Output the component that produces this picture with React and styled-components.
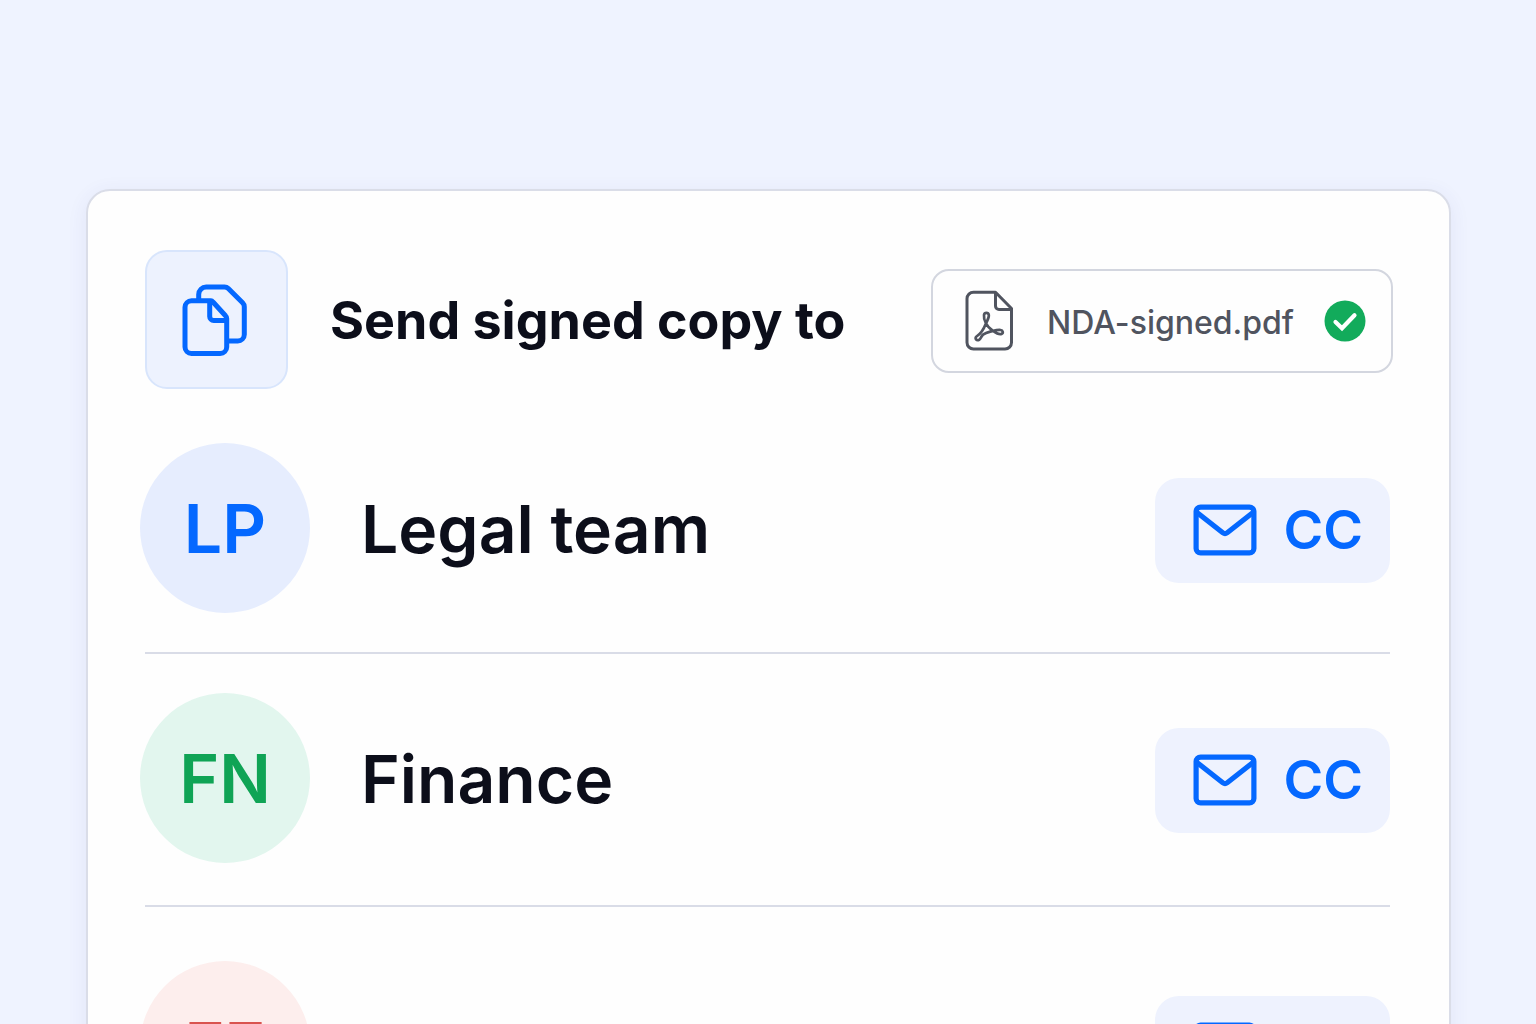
import React from "react";
import styled, { createGlobalStyle } from "styled-components";

const Global = createGlobalStyle`
  *, *::before, *::after { box-sizing: border-box; }
  body {
    margin: 0;
    background: #eff3ff;
    color: #0c0e1a;
    font-family: Inter, "Liberation Sans", sans-serif;
  }
  h1, h2, p, ul { margin: 0; padding: 0; }
`;

const Page = styled.main`
  height: 100vh;
  overflow: hidden;
  padding: 189px 85px 0 86px;
`;

const Card = styled.section`
  padding: 59px 59px 59px 57px;
  border: 2px solid #dadde8;
  border-radius: 24px;
  background: #fefefe;
  box-shadow: 0 4px 20px rgba(60, 70, 150, 0.08);
`;

const Header = styled.header`
  display: flex;
  align-items: center;
`;

const IconTile = styled.div`
  display: grid;
  place-items: center;
  flex: none;
  width: 143px;
  height: 139px;
  border: 2px solid #d8e5fc;
  border-radius: 22px;
  background: #edf2fe;
`;

const Title = styled.h1`
  flex: 1;
  margin: 2px 0 0 42px;
  font-size: 52px;
  line-height: 68px;
  font-weight: 700;
  white-space: nowrap;
`;

const FileChip = styled.div`
  display: flex;
  align-items: center;
  height: 104px;
  margin: 2px -3px 0 0;
  padding: 0 25px 0 32px;
  border: 2px solid #d3d6df;
  border-radius: 18px;
`;

const FileName = styled.span`
  margin: 4px 30px 0 33px;
  color: #50545f;
  font-size: 32px;
  line-height: 40px;
  font-weight: 500;
  white-space: nowrap;
`;

const List = styled.ul`
  margin-top: 54px;
  list-style: none;
`;

const Row = styled.li`
  display: flex;
  align-items: center;
  padding: ${(p) => p.$top}px 0 ${(p) => p.$bottom}px;
  border-bottom: 2px solid #d9dce7;
`;

const Avatar = styled.div`
  display: grid;
  place-items: center;
  flex: none;
  width: 170px;
  height: 170px;
  margin-left: -5px;
  border-radius: 50%;
  background: ${(p) => p.$bg};
  color: ${(p) => p.$fg};
  font-size: 68px;
  line-height: 84px;
  font-weight: 600;
`;

const Name = styled.h2`
  flex: 1;
  margin: 2px 0 0 51px;
  font-size: 66px;
  line-height: 84px;
  font-weight: 600;
`;

const CopyButton = styled.button`
  display: flex;
  align-items: center;
  gap: 26px;
  height: 105px;
  margin-top: 4px;
  padding: 0 27px 0 38px;
  border: 0;
  border-radius: 24px;
  background: #eef2fe;
  color: #0468ff;
  font-family: inherit;
  font-size: 54px;
  line-height: 68px;
  font-weight: 600;
  cursor: pointer;
`;

const CopyIcon = () => (
  <svg width="72" height="76" viewBox="1 0 72 76" fill="none" stroke="#0468ff" strokeWidth="5" strokeLinejoin="round" aria-hidden="true">
    <path d="M31 18.800H11.500a6.500 6.500 0 0 0-6.500 6.500V65a6.500 6.500 0 0 0 6.500 6.500h28.700a6.500 6.500 0 0 0 6.500-6.500V36.500q0-1.500-1.200-2.700L33 20q-1-1.200-2-1.200Z" />
    <path d="M29.700 19.500V34.500a4 4 0 0 0 4 4H46.500" />
    <path d="M18.700 18.500V12.500a7.500 7.500 0 0 1 7.500-7.500H44.500q2.200 0 3.800 1.600L62.600 20.800q1.700 1.700 1.700 4V52.500a6.500 6.500 0 0 1-6.500 6.500H47" />
  </svg>
);

const PdfIcon = () => (
  <svg width="49" height="61" viewBox="0 0 49 61" fill="none" stroke="#50545f" strokeWidth="3" strokeLinejoin="round" aria-hidden="true">
    <path d="M30.500 2.200H8.500A6.500 6.500 0 0 0 2 8.700V52.500A6.500 6.500 0 0 0 8.500 59H40a6.500 6.500 0 0 0 6.500-6.500V18.500Z" />
    <path d="M30.500 2.500V16a3.500 3.500 0 0 0 3.500 3.500H46.500" />
    <path strokeWidth="2.700" d="M11.500 46.500C16 43.500 19 38.500 20.700 34C22.500 30 24.300 27.500 23.800 25C23.300 22.200 19.500 22.200 19 25C18.600 28 19.600 30.500 20.800 33C22.500 36.800 25 38.800 28 40.800C31 43 34.500 44.600 36.500 43.900C38.600 43 38 40.300 35.500 40C32.500 39.700 29 40.700 26 41.400C23 42.200 20 43.100 18 44.600C16 46.300 16 48.700 14.200 49.700C11.500 51 9.300 48.300 11.500 46.500Z" />
  </svg>
);

const CheckIcon = () => (
  <svg width="42" height="42" viewBox="0 0 42 42" fill="none" role="img" aria-label="Signed">
    <circle cx="21" cy="21" r="20.500" fill="#12ab5b" />
    <path d="M11.500 22L18 28.200L30.500 15.200" stroke="#fff" strokeWidth="4.200" strokeLinecap="round" />
  </svg>
);

const MailIcon = () => (
  <svg width="64" height="52" viewBox="0 0 64 52" fill="none" stroke="#0468ff" strokeWidth="5.200" strokeLinejoin="round" aria-hidden="true">
    <rect x="3.100" y="3.100" width="57.800" height="45.800" rx="4.500" />
    <path d="M4 8.500L29.800 28.800Q32 30.500 34.200 28.800L60 8.500" />
  </svg>
);

const recipients = [
  { initials: "LP", name: "Legal team", bg: "#e6edfe", fg: "#0468ff", top: 0, bottom: 39 },
  { initials: "FN", name: "Finance", bg: "#e2f6ee", fg: "#0fa455", top: 39, bottom: 42 },
  { initials: "FE", name: "", bg: "#fdeeed", fg: "#d9534f", top: 54, bottom: 40 },
];

export default function App() {
  return (
    <>
      <Global />
      <Page>
        <Card>
          <Header>
            <IconTile><CopyIcon /></IconTile>
            <Title>Send signed copy to</Title>
            <FileChip>
              <PdfIcon />
              <FileName>NDA-signed.pdf</FileName>
              <CheckIcon />
            </FileChip>
          </Header>
          <List>
            {recipients.map((r) => (
              <Row key={r.initials} $top={r.top} $bottom={r.bottom}>
                <Avatar $bg={r.bg} $fg={r.fg}>{r.initials}</Avatar>
                <Name>{r.name}</Name>
                <CopyButton type="button"><MailIcon />CC</CopyButton>
              </Row>
            ))}
          </List>
        </Card>
      </Page>
    </>
  );
}
